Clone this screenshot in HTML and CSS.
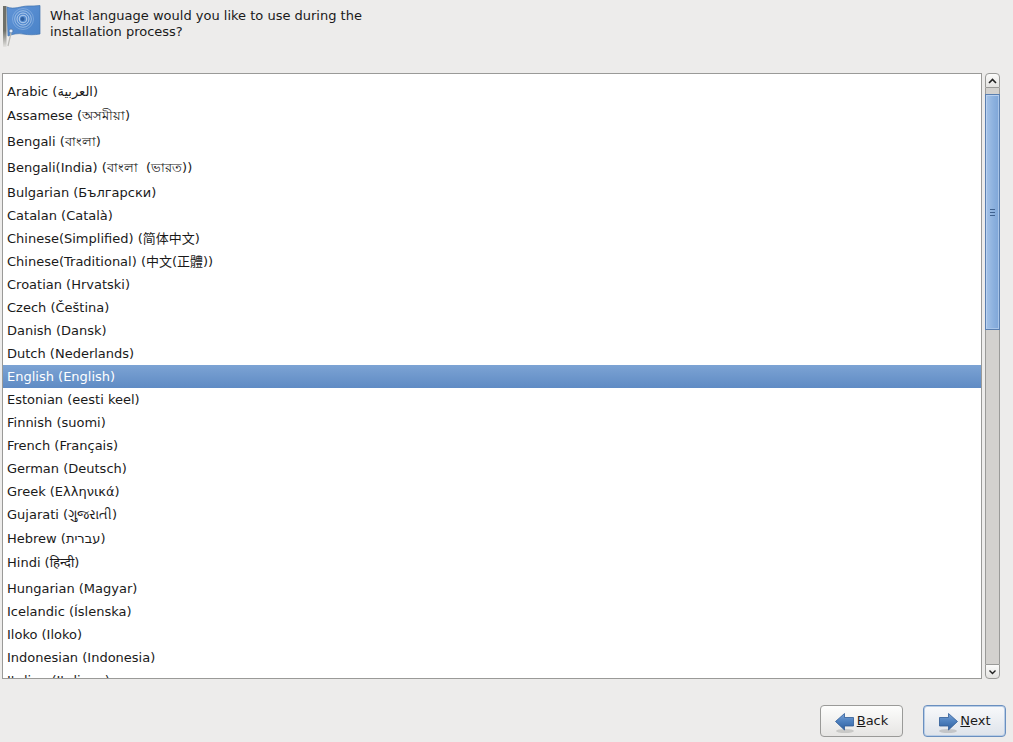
FILE: index.html
```html
<!DOCTYPE html>
<html lang="en">
<head>
<meta charset="utf-8">
<title>Language</title>
<link rel="stylesheet" href="styles.css">
</head>
<body>
<div class="screen">
  <header class="header">
    <svg class="flag" width="40" height="44" viewBox="0 0 40 44">
      <defs>
        <linearGradient id="poleFade" x1="0" x2="0" y1="0" y2="1"><stop offset="0.6" stop-color="#6f7069"/><stop offset="1" stop-color="#e4e3e1"/></linearGradient>
        <linearGradient id="cloth" x1="0" x2="1" y1="0" y2="1"><stop offset="0" stop-color="#5f93d6"/><stop offset="1" stop-color="#4a83c8"/></linearGradient>
        <linearGradient id="arrowBlue" x1="0" x2="0" y1="0" y2="1"><stop offset="0" stop-color="#7ba3d6"/><stop offset="0.45" stop-color="#4f82c0"/><stop offset="1" stop-color="#2f609f"/></linearGradient>
      </defs>
      <rect x="2" y="3" width="3.5" height="41" fill="url(#poleFade)"/>
      <path d="M6 4C13 7 20 3 27 3C31 3 35 3 39 2.5V31C33 32 28 32 22 31C17 30 12 31 7 33Z" fill="url(#cloth)" stroke="#3f72b0" stroke-width="0.7"/>
      <g fill="none" stroke="#bcd4f0">
        <circle cx="22" cy="16" r="10.5" stroke-width="0.9" opacity="0.4"/>
        <circle cx="22" cy="16" r="8.3" stroke-width="1" opacity="0.65"/>
        <circle cx="22" cy="16" r="6" stroke-width="1" opacity="0.85"/>
        <circle cx="22" cy="16" r="3.8" stroke-width="1" opacity="0.9"/>
      </g>
      <circle cx="21.5" cy="16" r="2" fill="#2f5f9e"/>
      <circle cx="10" cy="28" r="2" fill="#e6eef8" stroke="#4a6f9e" stroke-width="0.7"/>
      <path d="M10 30L7 43" stroke="#b8b8b4" stroke-width="1.2"/>
    </svg>
    <p class="question">What language would you like to use during the<br>installation process?</p>
  </header>

  <main class="content">
    <div class="list">
      <div class="row row-clip">Afrikaans (Afrikaans)</div>
      <div class="row row-arabic">Arabic (العربية)</div>
      <div class="row row-assamese">Assamese (অসমীয়া)</div>
      <div class="row row-bengali">Bengali (বাংলা)</div>
      <div class="row row-india">Bengali(India) (বাংলা <span class="wide">(ভারত))</span></div>
      <div class="row">Bulgarian (Български)</div>
      <div class="row">Catalan (Català)</div>
      <div class="row" lang="zh-CN">Chinese(Simplified) (简体中文)</div>
      <div class="row" lang="zh-TW">Chinese(Traditional) (中文(正體))</div>
      <div class="row">Croatian (Hrvatski)</div>
      <div class="row">Czech (Čeština)</div>
      <div class="row">Danish (Dansk)</div>
      <div class="row">Dutch (Nederlands)</div>
      <div class="row selected">English (English)</div>
      <div class="row">Estonian (eesti keel)</div>
      <div class="row">Finnish (suomi)</div>
      <div class="row">French (Français)</div>
      <div class="row">German (Deutsch)</div>
      <div class="row">Greek (Ελληνικά)</div>
      <div class="row">Gujarati (ગુજરાતી)</div>
      <div class="row row-hebrew">Hebrew (עברית)</div>
      <div class="row row-hindi">Hindi (हिन्दी)</div>
      <div class="row">Hungarian (Magyar)</div>
      <div class="row">Icelandic (Íslenska)</div>
      <div class="row">Iloko (Iloko)</div>
      <div class="row">Indonesian (Indonesia)</div>
      <div class="row">Italian (Italiano)</div>
    </div>
    <div class="scrollbar">
      <div class="step step-up">
        <svg width="9" height="6" viewBox="0 0 9 6"><path d="M1 5L4.5 1.5L8 5" fill="none" stroke="#222" stroke-width="1.6"/></svg>
      </div>
      <div class="trough">
        <div class="thumb"><span class="grip"></span><span class="grip"></span><span class="grip"></span></div>
      </div>
      <div class="step step-down">
        <svg width="9" height="6" viewBox="0 0 9 6"><path d="M1.5 1.5L4.5 4.5L7.5 1.5" fill="none" stroke="#222" stroke-width="1.4"/></svg>
      </div>
    </div>
  </main>

  <footer class="footer">
    <button class="btn" type="button">
      <svg class="arrow" width="20" height="22" viewBox="0 0 20 22">
        <ellipse cx="10" cy="19" rx="9" ry="2" fill="#c9c9c7"/>
        <path d="M0.5 9.5L9.5 1.5V5.5H18.5V14H9.5V18Z" fill="url(#arrowBlue)" stroke="#2f5c97" stroke-width="0.8"/>
      </svg>
      <span class="label"><u>B</u>ack</span>
    </button>
    <button class="btn btn-default" type="button">
      <svg class="arrow" width="20" height="22" viewBox="0 0 20 22">
        <ellipse cx="10" cy="19" rx="9" ry="2" fill="#c3c5c8"/>
        <path d="M19.5 9.5L10.5 1.5V5.5H1.5V14H10.5V18Z" fill="url(#arrowBlue)" stroke="#2f5c97" stroke-width="0.8"/>
      </svg>
      <span class="label"><u>N</u>ext</span>
    </button>
  </footer>
</div>
</body>
</html>
```
FILE: styles.css
```css
* { box-sizing: border-box; }
html, body { margin: 0; padding: 0; }
body {
  background: #edeceb;
  color: #1a1a1a;
  font-family: "DejaVu Sans", "Noto Sans", "Noto Sans CJK SC", sans-serif;
  font-size: 13px;
}
.screen {
  width: 1013px;
  height: 742px;
  display: flex;
  flex-direction: column;
  overflow: hidden;
}
.header {
  height: 73px;
  display: flex;
  align-items: flex-start;
  padding: 3px 0 0 1px;
  flex: none;
}
.flag { flex: none; display: block; }
.question {
  margin: 5px 0 0 9px;
  line-height: 16px;
}
.content {
  display: flex;
  height: 606px;
  flex: none;
  padding: 0 12px 0 2px;
  gap: 3px;
}
.list {
  width: 980px;
  height: 606px;
  background: #fff;
  border: 1px solid #9a9a98;
  overflow: hidden;
  flex: none;
}
.row {
  height: 23px;
  line-height: 23px;
  padding-left: 4px;
  white-space: nowrap;
}
.row-clip { margin-top: -17px; }
.row-arabic { height: 24px; line-height: 23px; }
.row-assamese { height: 24px; line-height: 24px; }
.row-bengali { height: 27px; line-height: 27px; }
.row-india { height: 26px; line-height: 25px; }
.wide { margin-left: 4px; }
.row-hebrew { height: 24px; line-height: 26px; }
.row-hindi { height: 27px; line-height: 26px; }
.row:lang(zh-CN) { font-family: "DejaVu Sans", "Noto Sans CJK SC", sans-serif; }
.row:lang(zh-TW) { font-family: "DejaVu Sans", "Noto Sans CJK TC", sans-serif; }
.selected {
  color: #fff;
  background: linear-gradient(#7ca3d4, #5f8bc4);
}
.scrollbar {
  width: 15px;
  height: 606px;
  display: flex;
  flex-direction: column;
  flex: none;
}
.step {
  height: 15px;
  flex: none;
  display: flex;
  align-items: center;
  justify-content: center;
  border: 1px solid #9a9a98;
  background: linear-gradient(#fbfbfa, #e4e3e1);
}
.step-up { border-radius: 4px 4px 0 0; }
.step-down { border-radius: 0 0 4px 4px; }
.trough {
  flex: 1;
  background: #d3d1ce;
  border-left: 1px solid #9a9a98;
  border-right: 1px solid #9a9a98;
  padding-top: 6px;
}
.thumb {
  height: 236px;
  margin: 0 -1px;
  border: 1px solid #5a7fb0;
  box-shadow: inset 1px 1px 0 #b9d0ee, inset -1px -1px 0 #a9c5e8;
  background: linear-gradient(90deg, #a5c3e8, #8bb0de 60%, #7fa6d8);
  display: flex;
  flex-direction: column;
  align-items: center;
  justify-content: center;
  gap: 2px;
}
.grip {
  width: 5px;
  height: 1px;
  background: #3f618f;
}
.footer {
  flex: 1;
  display: flex;
  justify-content: flex-end;
  gap: 20px;
  padding: 26px 7px 0 0;
}
.btn {
  width: 83px;
  height: 32px;
  display: flex;
  align-items: center;
  justify-content: center;
  gap: 2px;
  padding: 0;
  border: 1px solid #9a9a98;
  border-radius: 4px;
  background: linear-gradient(#fdfdfc, #e6e5e3);
  color: #1a1a1a;
  font: inherit;
}
.btn-default {
  border-color: #6a8fbf;
  box-shadow: inset 0 0 0 1px #b8cde6;
  background: linear-gradient(#f8f9fb, #dee3ea);
}
.arrow { display: block; flex: none; margin-top: 3px; }
.label { line-height: 16px; }
```
